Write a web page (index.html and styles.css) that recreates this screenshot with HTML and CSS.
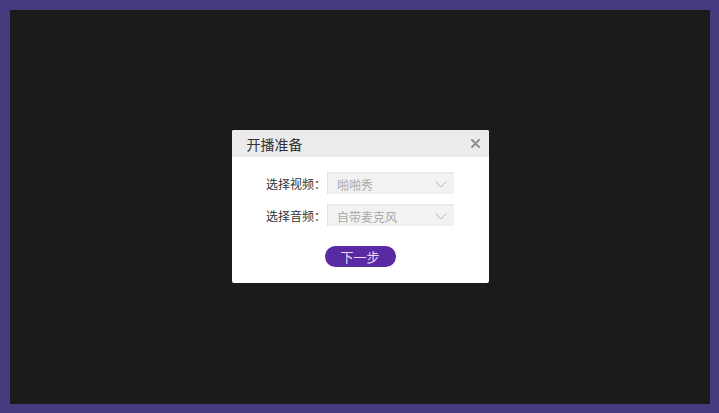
FILE: index.html
```html
<!DOCTYPE html>
<html lang="zh-CN">

<head>
    <meta charset="UTF-8">
    <meta name="viewport" content="width=device-width, initial-scale=1.0">
    <title>开播准备</title>
    <link rel="stylesheet" href="styles.css">
</head>

<body>
    <div class="stage">
        <div class="dialog">
            <div class="dialog-header">
                <span class="dialog-title">开播准备</span>
                <svg class="dialog-close" width="9" height="9" viewBox="0 0 9 9">
                    <path d="M1 1 L8 8 M8 1 L1 8" stroke="#8f8f8f" stroke-width="2" stroke-linecap="round"/>
                </svg>
            </div>
            <div class="dialog-body">
                <div class="form-row">
                    <label class="form-label">选择视频：</label>
                    <div class="select">
                        <span class="select-text">啪啪秀</span>
                        <svg class="select-arrow" width="12" height="7" viewBox="0 0 12 7">
                            <polyline points="0.5,0.5 6,6 11.5,0.5" fill="none" stroke="#b4b4b4" stroke-width="1"/>
                        </svg>
                    </div>
                </div>
                <div class="form-row">
                    <label class="form-label">选择音频：</label>
                    <div class="select">
                        <span class="select-text">自带麦克风</span>
                        <svg class="select-arrow" width="12" height="7" viewBox="0 0 12 7">
                            <polyline points="0.5,0.5 6,6 11.5,0.5" fill="none" stroke="#b4b4b4" stroke-width="1"/>
                        </svg>
                    </div>
                </div>
                <div class="actions">
                    <button class="next-btn">下一步</button>
                </div>
            </div>
        </div>
    </div>
</body>

</html>
```

FILE: styles.css
```css
body {
    margin: 0;
    padding: 0;
    background-color: #473a7e;
    font-family: "Noto Sans CJK SC", "Liberation Sans", sans-serif;
    color: #333;
}

.stage {
    margin: 10px 9px 9px 10px;
    height: 394px;
    background-color: #1b1b1b;
    display: flex;
    justify-content: center;
    align-items: center;
}

.dialog {
    width: 257px;
    height: 153px;
    margin-top: -1px;
    background-color: #fff;
    border-radius: 2px;
    overflow: hidden;
}

.dialog-header {
    height: 27px;
    background-color: #ebebed;
    display: flex;
    align-items: center;
    justify-content: space-between;
    padding: 0 9px 0 15px;
}

.dialog-title {
    font-size: 14px;
    color: #333;
}

.dialog-close {
    display: block;
}

.dialog-body {
    padding-top: 15px;
}

.form-row {
    display: flex;
    align-items: center;
    justify-content: center;
    margin-bottom: 10px;
}

.form-label {
    width: 61px;
    font-size: 12px;
    color: #333;
    white-space: nowrap;
}

.select {
    width: 127px;
    height: 22px;
    box-sizing: border-box;
    background-color: #f2f2f2;
    border-top: 2px solid #e8e8e8;
    border-left: 1px solid #e2e2e2;
    display: flex;
    align-items: center;
    justify-content: space-between;
    padding: 0 7px 0 9px;
}

.select-text {
    font-size: 12px;
    color: #a8a8a8;
}

.select-arrow {
    display: block;
}

.actions {
    display: flex;
    justify-content: center;
    padding-top: 10px;
}

.next-btn {
    width: 71px;
    height: 21px;
    border: none;
    border-radius: 11px;
    background-color: #5a2aa5;
    color: #e6dcf5;
    font-family: "Noto Sans CJK SC", sans-serif;
    font-size: 13px;
    padding: 0;
    line-height: 21px;
}
```
